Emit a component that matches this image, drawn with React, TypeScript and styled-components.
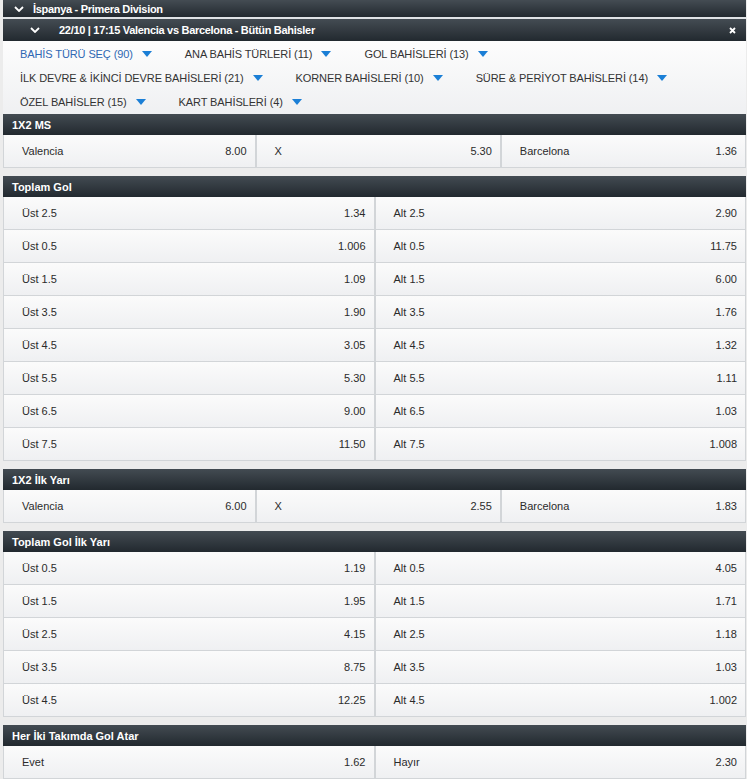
import React from "react";
import styled, { createGlobalStyle } from "styled-components";

const GlobalStyle = createGlobalStyle`
  html, body {
    margin: 0;
    padding: 0;
    background: #ececec;
    font-family: "Liberation Sans", Arial, sans-serif;
  }
`;

const Page = styled.div`
  margin-left: 3px;
  width: 743px;
`;

const DarkBar = styled.div<{ $h: number; $pl: number; $gap: number }>`
  height: ${(p) => p.$h}px;
  padding-left: ${(p) => p.$pl}px;
  padding-right: 10px;
  display: flex;
  align-items: center;
  gap: ${(p) => p.$gap}px;
  background: linear-gradient(#444c53, #22292f);
  color: #fff;
  font-weight: bold;
  font-size: 11px;
  letter-spacing: -0.3px;
`;

const LeagueWrap = styled.div`
  border-bottom: 2px solid #dfe2e5;
`;

const BarTitle = styled.span`
  flex: 1;
  white-space: nowrap;
`;

const Chevron = () => (
  <svg width="10" height="6" viewBox="0 0 10 6">
    <polyline points="1,1 5,5 9,1" fill="none" stroke="#fff" strokeWidth="1.8" />
  </svg>
);

const CloseIcon = () => (
  <svg width="7" height="7" viewBox="0 0 7 7">
    <path d="M1 1L6 6M6 1L1 6" stroke="#fff" strokeWidth="1.8" />
  </svg>
);

const FilterPanel = styled.div`
  background: linear-gradient(#fdfdfd, #eff0f2);
  padding: 1px 17px 0;
  display: flex;
  flex-wrap: wrap;
  column-gap: 33px;
  line-height: 24px;
  font-size: 11px;
  letter-spacing: -0.1px;
`;

const FilterItem = styled.div<{ $active?: boolean }>`
  display: flex;
  align-items: center;
  gap: 9px;
  color: ${(p) => (p.$active ? "#2f67b3" : "#333")};
  white-space: nowrap;
`;

const Tri = styled.span`
  width: 0;
  height: 0;
  border-left: 5px solid transparent;
  border-right: 5px solid transparent;
  border-top: 6px solid #1b7fd6;
`;

const Section = styled.section`
  margin-bottom: 8px;
`;

const SectionHeader = styled.div`
  height: 21px;
  padding-left: 9px;
  display: flex;
  align-items: center;
  background: linear-gradient(#434b52, #22292f);
  color: #fff;
  font-weight: bold;
  font-size: 11px;
`;

const Grid = styled.div<{ $cols: string }>`
  display: grid;
  grid-template-columns: ${(p) => p.$cols};
`;

const Cell = styled.div`
  box-sizing: border-box;
  height: 33px;
  border-left: 1px solid #d2d5d8;
  border-right: 1px solid #d2d5d8;
  border-bottom: 1px solid #d2d5d8;
  background: linear-gradient(#fbfbfb, #eff0f2);
  padding: 0 8px 0 18px;
  display: flex;
  align-items: center;
  justify-content: space-between;
  font-size: 11px;
  color: #2b2b2b;
`;

type Pair = [string, string];

const OddCell = ({ label, odd }: { label: string; odd: string }) => (
  <Cell>
    <span>{label}</span>
    <span>{odd}</span>
  </Cell>
);

const ThreeWay = ({ title, odds }: { title: string; odds: [string, string, string] }) => (
  <Section>
    <SectionHeader>{title}</SectionHeader>
    <Grid $cols="34% 33% 33%">
      <OddCell label="Valencia" odd={odds[0]} />
      <OddCell label="X" odd={odds[1]} />
      <OddCell label="Barcelona" odd={odds[2]} />
    </Grid>
  </Section>
);

const TwoWay = ({ title, rows }: { title: string; rows: [Pair, Pair][] }) => (
  <Section>
    <SectionHeader>{title}</SectionHeader>
    <Grid $cols="1fr 1fr">
      {rows.map(([a, b], i) => (
        <React.Fragment key={i}>
          <OddCell label={a[0]} odd={a[1]} />
          <OddCell label={b[0]} odd={b[1]} />
        </React.Fragment>
      ))}
    </Grid>
  </Section>
);

const filters = [
  { t: "BAHİS TÜRÜ SEÇ (90)", active: true },
  { t: "ANA BAHİS TÜRLERİ (11)" },
  { t: "GOL BAHİSLERİ (13)" },
  { t: "İLK DEVRE & İKİNCİ DEVRE BAHİSLERİ (21)" },
  { t: "KORNER BAHİSLERİ (10)" },
  { t: "SÜRE & PERİYOT BAHİSLERİ (14)" },
  { t: "ÖZEL BAHİSLER (15)" },
  { t: "KART BAHİSLERİ (4)" },
];

const totalGoals: [Pair, Pair][] = [
  [["Üst 2.5", "1.34"], ["Alt 2.5", "2.90"]],
  [["Üst 0.5", "1.006"], ["Alt 0.5", "11.75"]],
  [["Üst 1.5", "1.09"], ["Alt 1.5", "6.00"]],
  [["Üst 3.5", "1.90"], ["Alt 3.5", "1.76"]],
  [["Üst 4.5", "3.05"], ["Alt 4.5", "1.32"]],
  [["Üst 5.5", "5.30"], ["Alt 5.5", "1.11"]],
  [["Üst 6.5", "9.00"], ["Alt 6.5", "1.03"]],
  [["Üst 7.5", "11.50"], ["Alt 7.5", "1.008"]],
];

const totalGoalsHalf: [Pair, Pair][] = [
  [["Üst 0.5", "1.19"], ["Alt 0.5", "4.05"]],
  [["Üst 1.5", "1.95"], ["Alt 1.5", "1.71"]],
  [["Üst 2.5", "4.15"], ["Alt 2.5", "1.18"]],
  [["Üst 3.5", "8.75"], ["Alt 3.5", "1.03"]],
  [["Üst 4.5", "12.25"], ["Alt 4.5", "1.002"]],
];

export default function App() {
  return (
    <>
      <GlobalStyle />
      <Page>
        <LeagueWrap>
          <DarkBar $h={17} $pl={11} $gap={9}>
            <Chevron />
            <BarTitle>İspanya - Primera Division</BarTitle>
          </DarkBar>
        </LeagueWrap>
        <DarkBar $h={22} $pl={27} $gap={19}>
          <Chevron />
          <BarTitle>22/10 | 17:15 Valencia vs Barcelona - Bütün Bahisler</BarTitle>
          <CloseIcon />
        </DarkBar>
        <FilterPanel>
          {filters.map((f) => (
            <FilterItem key={f.t} $active={f.active}>
              <span>{f.t}</span>
              <Tri />
            </FilterItem>
          ))}
        </FilterPanel>
        <ThreeWay title="1X2 MS" odds={["8.00", "5.30", "1.36"]} />
        <TwoWay title="Toplam Gol" rows={totalGoals} />
        <ThreeWay title="1X2 İlk Yarı" odds={["6.00", "2.55", "1.83"]} />
        <TwoWay title="Toplam Gol İlk Yarı" rows={totalGoalsHalf} />
        <TwoWay title="Her İki Takımda Gol Atar" rows={[[["Evet", "1.62"], ["Hayır", "2.30"]]]} />
      </Page>
    </>
  );
}
